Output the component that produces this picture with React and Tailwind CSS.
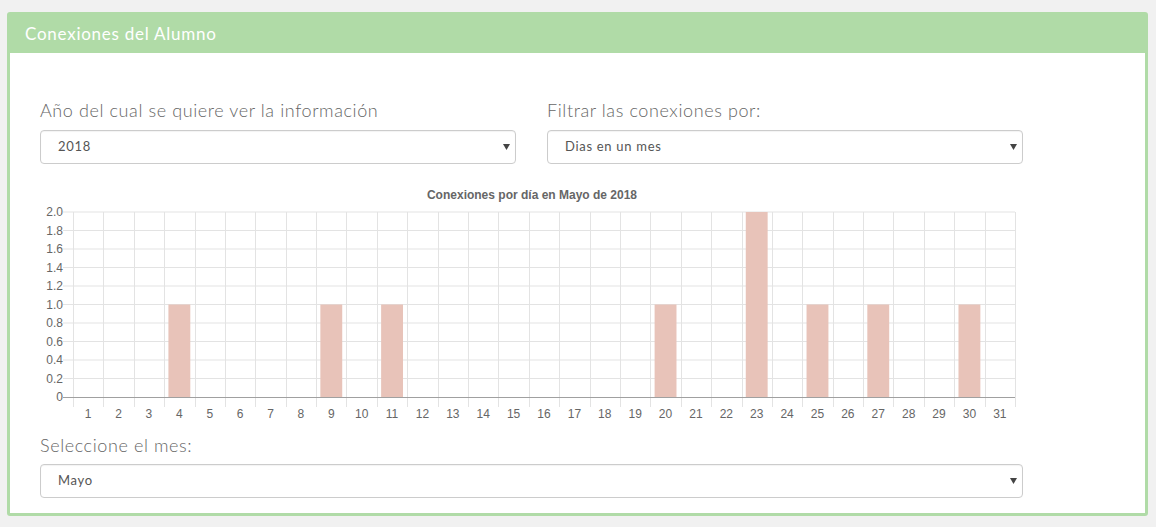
import React from 'react';

const data = [0, 0, 0, 1, 0, 0, 0, 0, 1, 0, 1, 0, 0, 0, 0, 0, 0, 0, 0, 1, 0, 0, 2, 0, 1, 0, 1, 0, 0, 1, 0];

const Select = ({ value }) => (
  <div className="flex h-[34px] items-center justify-between rounded border border-[#cccccc] bg-white pl-[17px] pr-[4px] text-[13px] tracking-[0.7px] text-[#555555] shadow-[inset_0_1px_1px_rgba(0,0,0,0.05)]">
    <span>{value}</span>
    <svg width="7" height="6" viewBox="0 0 7 6" className="mr-[1px]">
      <path d="M0 0 H7 L3.5 6 Z" fill="#444" />
    </svg>
  </div>
);

const Chart = () => {
  const left = 33;
  const right = 975;
  const top = 48;
  const bottom = 233;
  const step = (right - left) / 31;
  const yStep = (bottom - top) / 10;
  const yLabels = ['0', '0.2', '0.4', '0.6', '0.8', '1.0', '1.2', '1.4', '1.6', '1.8', '2.0'];

  return (
    <svg width="983" height="268" className="block" style={{ fontFamily: '"Liberation Sans", Arial, sans-serif' }}>
      <text x="492" y="35" textAnchor="middle" fontSize="12" fontWeight="bold" fill="#666">
        Conexiones por día en Mayo de 2018
      </text>
      {yLabels.map((l, i) => {
        const y = bottom - i * yStep;
        return (
          <g key={l}>
            {i > 0 && <line x1={left - 10} x2={right} y1={y} y2={y} stroke="#e3e3e3" strokeWidth="1" />}
            <text x={left - 10} y={y + 4} textAnchor="end" fontSize="12" fill="#666">{l}</text>
          </g>
        );
      })}
      {Array.from({ length: 32 }).map((_, i) => {
        const x = Math.round(left + i * step) + 0.5;
        return <line key={i} x1={x} x2={x} y1={top} y2={bottom + 10} stroke="#e3e3e3" strokeWidth="1" />;
      })}
      {data.map((v, i) => {
        if (!v) return null;
        const cx = left + (i + 0.5) * step;
        const w = step * 0.72;
        const h = v * 5 * yStep;
        return <rect key={i} x={cx - w / 2} y={bottom - h} width={w} height={h} fill="#e8c3b9" />;
      })}
      <line x1={left - 10} x2={right} y1={bottom + 0.5} y2={bottom + 0.5} stroke="#a0a0a0" strokeWidth="1" />
      {data.map((_, i) => (
        <text key={i} x={left + (i + 0.5) * step} y="254" textAnchor="middle" fontSize="12" fill="#666">
          {i + 1}
        </text>
      ))}
    </svg>
  );
};

export default function App() {
  return (
    <div className="min-h-[527px] w-[1156px] bg-[#f1f1f1] pt-[12px] pl-[7px]" style={{ fontFamily: 'Lato, "Open Sans", sans-serif' }}>
      <div className="w-[1141px] rounded-[3px] border-[3px] border-[#b0dba7] bg-white">
        <div className="flex h-[38px] items-center bg-[#b0dba7] pl-[15px] text-[17px] tracking-[0.75px] text-white">
          Conexiones del Alumno
        </div>
        <div className="pl-[30px] pt-[44px] pb-[15px]">
          <div className="flex gap-[31px]">
            <div className="w-[476px]">
              <div className="mb-[7px] h-[26px] text-[18px] font-light leading-[26px] tracking-[0.6px] text-[#666]">
                Año del cual se quiere ver la información
              </div>
              <Select value="2018" />
            </div>
            <div className="w-[476px]">
              <div className="mb-[7px] h-[26px] text-[18px] font-light leading-[26px] tracking-[0.6px] text-[#666]">
                Filtrar las conexiones por:
              </div>
              <Select value="Dias en un mes" />
            </div>
          </div>
          <Chart />
          <div className="w-[983px]">
            <div className="mb-[6px] h-[26px] text-[18px] font-light leading-[26px] tracking-[0.6px] text-[#666]">
              Seleccione el mes:
            </div>
            <Select value="Mayo" />
          </div>
        </div>
      </div>
    </div>
  );
}
